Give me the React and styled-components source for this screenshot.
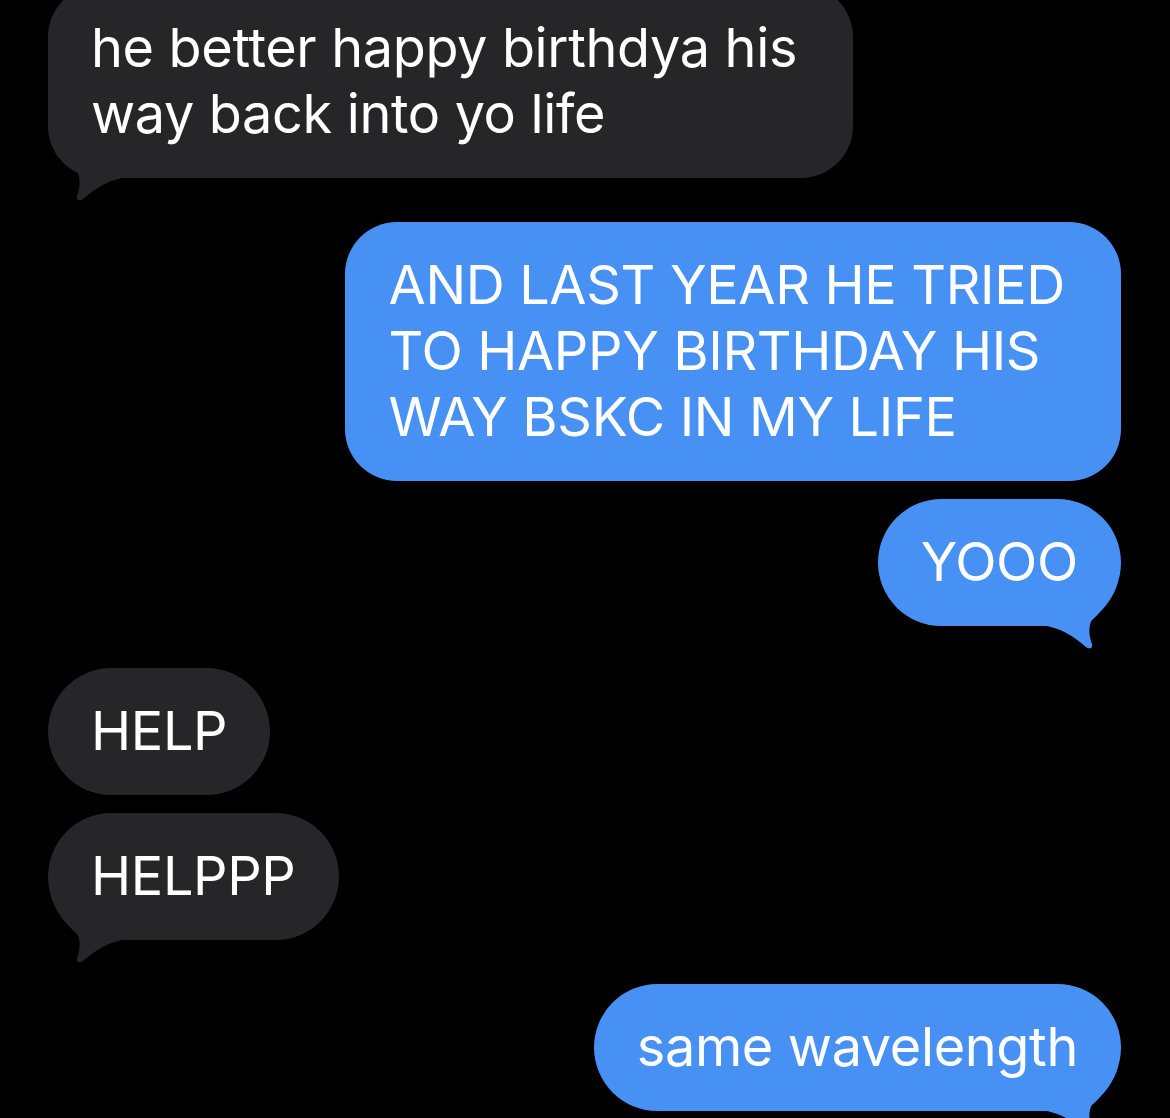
import React from "react";
import styled, { createGlobalStyle } from "styled-components";

const GlobalStyle = createGlobalStyle`
  html, body {
    margin: 0;
    padding: 0;
    background: #000;
    overflow: hidden;
  }
  body {
    font-family: Inter, "Noto Sans", "Liberation Sans", sans-serif;
    -webkit-font-smoothing: antialiased;
  }
`;

const BLUE = "#4891f4";
const GRAY = "#262629";

const Thread = styled.div`
  display: flex;
  flex-direction: column;
  padding: 0 49px 0 48px;
  margin-top: -15px;
  height: 1133px;
`;

const Row = styled.div`
  display: flex;
  justify-content: ${({ $mine }) => ($mine ? "flex-end" : "flex-start")};
  margin-top: ${({ $gap }) => $gap}px;
`;

const Bubble = styled.div`
  position: relative;
  background: ${({ $mine }) => ($mine ? BLUE : GRAY)};
  color: #fff;
  font-size: 54px;
  line-height: 66px;
  letter-spacing: -0.35px;
  padding: 30px ${({ $lines }) => ($lines > 1 ? 56 : 43)}px 31px 43px;
  border-radius: ${({ $lines }) => ($lines > 1 ? "52px" : "64px")};
  white-space: nowrap;
`;

const Tail = styled.svg`
  position: absolute;
  bottom: -24px;
  width: 80px;
  height: 70px;
  ${({ $mine }) =>
    $mine ? "right: 0;" : "left: 0; transform: scaleX(-1);"}
`;

function BubbleTail({ mine }) {
  return (
    <Tail $mine={mine} viewBox="0 0 80 70">
      <path
        fill={mine ? BLUE : GRAY}
        d="M5 1 L77 1 C74 17 61 31 51 40 C48 44 47 54 51 64 C52 68 49 70 45 67 C36 59 24 50 6 46 Z"
      />
    </Tail>
  );
}

const messages = [
  { mine: false, gap: 0, tail: true, lines: ["he better happy birthdya his", "way back into yo life"] },
  { mine: true, gap: 44, tail: false, lines: ["AND LAST YEAR HE TRIED", "TO HAPPY BIRTHDAY HIS", "WAY BSKC IN MY LIFE"] },
  { mine: true, gap: 18, tail: true, lines: ["YOOO"] },
  { mine: false, gap: 42, tail: false, lines: ["HELP"] },
  { mine: false, gap: 18, tail: true, lines: ["HELPPP"] },
  { mine: true, gap: 44, tail: true, lines: ["same wavelength"] },
];

export default function App() {
  return (
    <>
      <GlobalStyle />
      <Thread>
        {messages.map((m, i) => (
          <Row key={i} $mine={m.mine} $gap={m.gap}>
            <Bubble $mine={m.mine} $lines={m.lines.length}>
              {m.tail && <BubbleTail mine={m.mine} />}
              {m.lines.map((l, j) => (
                <React.Fragment key={j}>
                  {j > 0 && <br />}
                  {l}
                </React.Fragment>
              ))}
            </Bubble>
          </Row>
        ))}
      </Thread>
    </>
  );
}
